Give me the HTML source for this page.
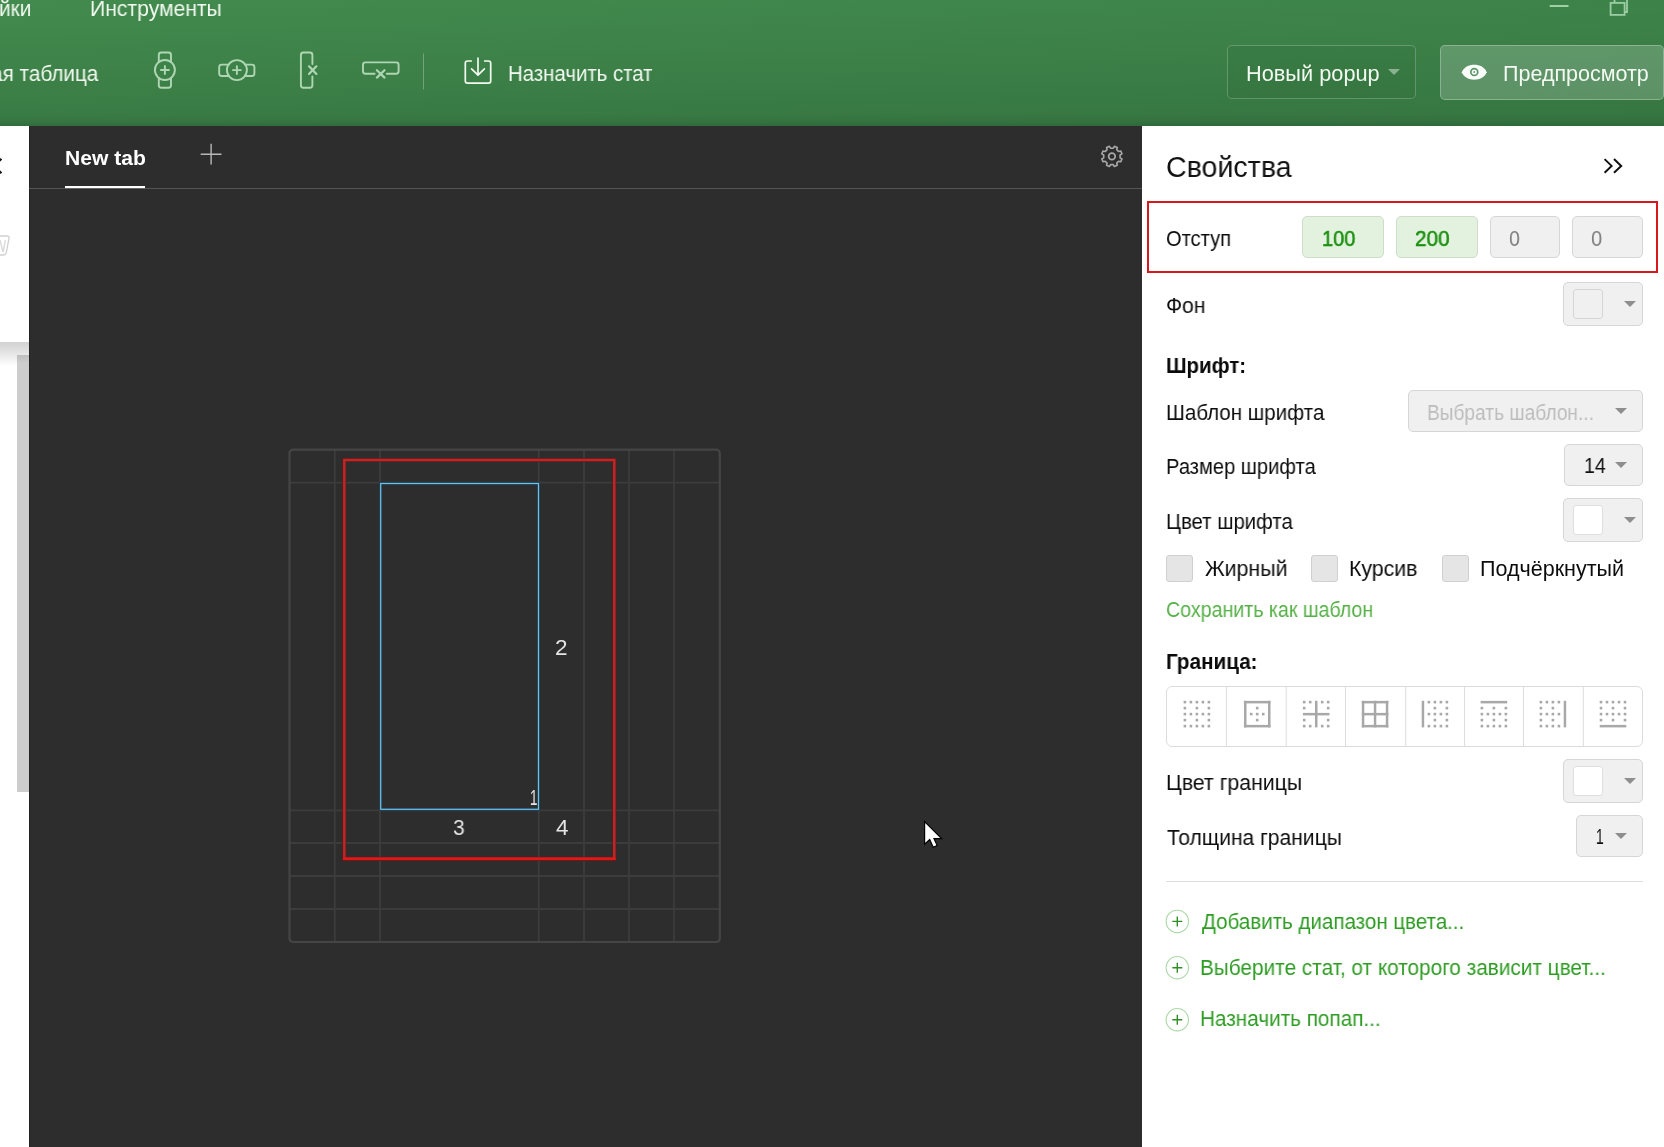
<!DOCTYPE html>
<html lang="ru"><head><meta charset="utf-8"><title>Свойства</title>
<style>
*{box-sizing:border-box;margin:0;padding:0}
html,body{width:1664px;height:1147px;overflow:hidden;background:#fff;font-family:"Liberation Sans","DejaVu Sans",sans-serif}
#hdr{position:absolute;left:0;top:0;width:1664px;height:126px;background:linear-gradient(95deg,#428a4d 0%,#40874c 40%,#3d8349 100%);overflow:hidden}
#hdr .shade{position:absolute;left:0;top:0;width:1664px;height:126px;background:linear-gradient(180deg,rgba(10,40,20,0) 0%,rgba(10,40,20,.02) 20%,rgba(10,40,20,.08) 55%,rgba(10,40,20,.14) 90%,rgba(10,40,20,.20) 96%,rgba(10,40,20,.30) 100%)}
.t{position:absolute;white-space:nowrap;line-height:1;transform-origin:0 0;display:block;will-change:transform}
#canvas{position:absolute;left:29px;top:126px;width:1113px;height:1021px;background:#2d2d2d}
#left{position:absolute;left:0;top:126px;width:29px;height:1021px;background:#fff;overflow:hidden}
#right{position:absolute;left:1142px;top:126px;width:522px;height:1021px;background:#fff}
.box{position:absolute;background:#f0f0f0;border:1px solid #d6d6d6;border-radius:5px}
.gbox{position:absolute;background:#e3f2df;border:1px solid #cddccb;border-radius:5px}
.sw{position:absolute;border:1px solid #dedede;border-radius:3px;background:#fff}
.cb{position:absolute;width:27px;height:27px;background:#e5e5e5;border:1px solid #d0d0d0;border-radius:3px;top:555px}
.arr{position:absolute;width:0;height:0;border-left:6px solid transparent;border-right:6px solid transparent;border-top:6px solid #8e8e8e}
svg{position:absolute;left:0;top:0;overflow:visible}
</style></head><body>
<div id="hdr"><div class="shade"></div>
<div style="position:absolute;left:1227px;top:45px;width:189px;height:54px;border:1px solid rgba(255,255,255,.22);border-radius:5px;background:rgba(0,0,0,.03)"></div>
<div style="position:absolute;left:1440px;top:45px;width:224px;height:55px;border:1px solid rgba(255,255,255,.28);border-radius:5px;background:rgba(255,255,255,.19)"></div>
<div class="arr" style="left:1388px;top:69px;border-top-color:rgba(255,255,255,.42)"></div>
</div>
<div id="left">
<div style="position:absolute;left:0;top:216px;width:29px;height:24px;background:linear-gradient(180deg,#d2d2d2 0%,#e4e4e4 45%,#fff 100%)"></div>
<div style="position:absolute;left:17px;top:229px;width:12px;height:437px;background:#cdcdcd"></div>
<div style="position:absolute;left:17px;top:229px;width:12px;height:8px;background:linear-gradient(180deg,#bdbdbd,#cdcdcd)"></div>
</div>
<div id="canvas"><div style="position:absolute;left:0;top:0;width:1px;height:1021px;background:#232323"></div></div>
<div id="right"></div>

<div class="gbox" style="left:1302px;top:216px;width:82px;height:42px"></div>
<div class="gbox" style="left:1396px;top:216px;width:82px;height:42px"></div>
<div class="box" style="left:1490px;top:216px;width:70px;height:42px"></div>
<div class="box" style="left:1572px;top:216px;width:71px;height:42px"></div>
<div style="position:absolute;left:1147px;top:201px;width:511px;height:71.5px;border:2px solid #d8181c"></div>

<div class="box" style="left:1563px;top:282px;width:80px;height:44px"></div>
<div class="sw" style="left:1573px;top:289px;width:30px;height:30px;background:#f0f0f0;border-color:#d6d6d6"></div>
<div class="arr" style="left:1624px;top:301px"></div>

<div class="box" style="left:1408px;top:390px;width:235px;height:42px"></div>
<div class="arr" style="left:1615px;top:408px"></div>

<div class="box" style="left:1564px;top:444px;width:79px;height:42px"></div>
<div class="arr" style="left:1615px;top:462px"></div>

<div class="box" style="left:1563px;top:498px;width:80px;height:44px"></div>
<div class="sw" style="left:1573px;top:505px;width:30px;height:30px"></div>
<div class="arr" style="left:1624px;top:517px"></div>

<div class="cb" style="left:1166px"></div>
<div class="cb" style="left:1311px"></div>
<div class="cb" style="left:1442px"></div>

<div style="position:absolute;left:1166px;top:686px;width:477px;height:60.5px;border:1px solid #dcdcdc;border-radius:6px;background:#fff"></div>

<div class="box" style="left:1563px;top:759px;width:80px;height:44px"></div>
<div class="sw" style="left:1573px;top:766px;width:30px;height:30px"></div>
<div class="arr" style="left:1624px;top:778px"></div>

<div class="box" style="left:1576px;top:815px;width:67px;height:42px"></div>
<div class="arr" style="left:1615px;top:833px"></div>

<div style="position:absolute;left:1166px;top:881px;width:477px;height:1px;background:#dedede"></div>

<svg width="1664" height="1147" viewBox="0 0 1664 1147" fill="none">
<!-- header icons -->
<g stroke="#afd6b3" stroke-width="1.9" stroke-linecap="round" stroke-linejoin="round">
<path d="M158.8 62 V55 Q158.8 52.5 161.3 52.5 H168.5 Q171 52.5 171 55 V62"/>
<path d="M158.8 78 V85.2 Q158.8 87.7 161.3 87.7 H168.5 Q171 87.7 171 85.2 V78"/>
<circle cx="164.9" cy="70" r="10"/>
<path d="M160.9 70 H168.9 M164.9 66 V74"/>
<path d="M228.5 64.6 H221.7 Q219.2 64.6 219.2 67.1 V73.5 Q219.2 76 221.7 76 H228.5"/>
<path d="M245.3 64.6 H251.9 Q254.4 64.6 254.4 67.1 V73.5 Q254.4 76 251.9 76 H245.3"/>
<circle cx="236.9" cy="70.1" r="10"/>
<path d="M232.9 70.1 H240.9 M236.9 66.1 V74.1"/>
<path d="M312.4 64 V55 Q312.4 52.5 309.9 52.5 H303.4 Q300.9 52.5 300.9 55 V85.2 Q300.9 87.7 303.4 87.7 H309.9 Q312.4 87.7 312.4 85.2 V76.5"/>
<path d="M309 66.3 L316.4 73.9 M316.4 66.3 L309 73.9" stroke-width="2.2"/>
<path d="M374.6 73.8 H365.5 Q363 73.8 363 71.3 V64.9 Q363 62.4 365.5 62.4 H396.1 Q398.6 62.4 398.6 64.9 V71.3 Q398.6 73.8 396.1 73.8 H386.8"/>
<path d="M376.9 70.2 L384.5 77.6 M384.5 70.2 L376.9 77.6" stroke-width="2.2"/>
</g>
<rect x="423" y="53.5" width="1" height="36" fill="rgba(255,255,255,.28)"/>
<!-- assign icon -->
<g stroke="#f3faf1" stroke-width="1.7" stroke-linecap="round" stroke-linejoin="round">
<path d="M471.3 61 H467.5 Q465.3 61 465.3 63.2 V81 Q465.3 83.2 467.5 83.2 H488.5 Q490.7 83.2 490.7 81 V63.2 Q490.7 61 488.5 61 H484.7"/>
<path d="M478 58.2 V75 M471.6 68.8 L478 75.2 L484.4 68.8"/>
</g>
<!-- window buttons -->
<rect x="1549.7" y="5" width="18.8" height="2" fill="#9dd3a4"/>
<g stroke="#9ccca4" stroke-width="1.8"><rect x="1610.6" y="2.9" width="14" height="12"/><path d="M1614.5 2 V-2 H1627 V12 H1625"/></g>
<!-- eye -->
<path d="M1461.8 72.2 C1465.4 62.3 1483.1 62.3 1486.7 72.2 C1483.1 82.1 1465.4 82.1 1461.8 72.2Z" fill="#fbfdfa"/>
<circle cx="1474.3" cy="72" r="4.3" fill="#5a9767"/>
<circle cx="1474.3" cy="72" r="2.6" fill="#fbfdfa"/>
<circle cx="1474.3" cy="72" r="0.9" fill="#5a9767"/>

<!-- tab bar -->
<rect x="29" y="188" width="1113" height="1" fill="#555"/>
<rect x="65" y="186" width="80" height="2.1" fill="#fff"/>
<path d="M200.7 154.2 H221.5 M211.1 143.8 V164.6" stroke="#b8b8b8" stroke-width="1.4"/>
<path d="M1120.09 157.76 L1121.99 158.91 L1120.81 161.76 L1118.65 161.23 L1116.73 163.15 L1117.26 165.31 L1114.41 166.49 L1113.26 164.59 L1110.54 164.59 L1109.39 166.49 L1106.54 165.31 L1107.07 163.15 L1105.15 161.23 L1102.99 161.76 L1101.81 158.91 L1103.71 157.76 L1103.71 155.04 L1101.81 153.89 L1102.99 151.04 L1105.15 151.57 L1107.07 149.65 L1106.54 147.49 L1109.39 146.31 L1110.54 148.21 L1113.26 148.21 L1114.41 146.31 L1117.26 147.49 L1116.73 149.65 L1118.65 151.57 L1120.81 151.04 L1121.99 153.89 L1120.09 155.04Z" stroke="#a8a8a8" stroke-width="1.6" stroke-linejoin="round"/>
<circle cx="1111.9" cy="156.4" r="3.3" stroke="#a8a8a8" stroke-width="1.7"/>

<!-- left panel bits -->
<path d="M1.4 158.8 L-5.8 166 L1.4 173.2" stroke="#111" stroke-width="2.2"/>
<path d="M-6 236 H7 Q9.5 236 9 238.5 L6.3 252.5 Q5.8 255 3.3 255 H-6" stroke="#cfcfcf" stroke-width="1.3"/>
<path d="M0 240 L3 252 L5.5 240" stroke="#d8d8d8" stroke-width="1.3"/>

<!-- grid -->
<g stroke="#3c3c3c" stroke-width="1.8">
<path d="M334.8 450 V942 M379.9 450 V942 M538.7 450 V942 M584 450 V942 M629 450 V942 M674 450 V942"/>
<path d="M289.5 482.6 H720 M289.5 810.3 H720 M289.5 843 H720 M289.5 876 H720 M289.5 909 H720"/>
</g>
<rect x="289.5" y="449.7" width="430.3" height="492.3" rx="3.5" stroke="#454545" stroke-width="2.2"/>
<rect x="344.3" y="460" width="270" height="398.8" stroke="#6a1515" stroke-width="4"/><rect x="344.3" y="460" width="270" height="398.8" stroke="#b52a2a" stroke-width="2.5"/><rect x="342.9" y="857.5" width="272.8" height="2.6" fill="#e21717"/>
<rect x="380.7" y="483.5" width="157.8" height="325.8" stroke="#15425a" stroke-width="2.6"/><rect x="380.7" y="483.5" width="157.8" height="325.8" stroke="#76bee4" stroke-width="1.2"/>
<!-- cursor -->
<path d="M924.6 821.6 V844.2 L929.7 839.6 L933.2 847.3 L937.2 845.6 L934 838.7 H941.6 Z" fill="#fff" stroke="#000" stroke-width="1.2" stroke-linejoin="miter"/>

<!-- chevrons -->
<path d="M1604.6 159.1 L1611.6 165.9 L1604.6 172.7 M1614 159.1 L1621.2 165.9 L1614 172.7" stroke="#111" stroke-width="2"/>
<!-- border icons -->
<rect x="1225.9" y="686.5" width="1" height="59.5" fill="#dcdcdc"/><rect x="1285.7" y="686.5" width="1" height="59.5" fill="#dcdcdc"/><rect x="1345.0" y="686.5" width="1" height="59.5" fill="#dcdcdc"/><rect x="1405.2" y="686.5" width="1" height="59.5" fill="#dcdcdc"/><rect x="1464.1" y="686.5" width="1" height="59.5" fill="#dcdcdc"/><rect x="1523.0" y="686.5" width="1" height="59.5" fill="#dcdcdc"/><rect x="1582.8" y="686.5" width="1" height="59.5" fill="#dcdcdc"/>
<g fill="#a8a8a8"><rect x="1183.6" y="700.8" width="2.6" height="2.6"/><rect x="1189.6" y="700.8" width="2.6" height="2.6"/><rect x="1195.6" y="700.8" width="2.6" height="2.6"/><rect x="1201.6" y="700.8" width="2.6" height="2.6"/><rect x="1207.6" y="700.8" width="2.6" height="2.6"/><rect x="1183.6" y="706.8" width="2.6" height="2.6"/><rect x="1195.6" y="706.8" width="2.6" height="2.6"/><rect x="1207.6" y="706.8" width="2.6" height="2.6"/><rect x="1183.6" y="712.8" width="2.6" height="2.6"/><rect x="1189.6" y="712.8" width="2.6" height="2.6"/><rect x="1195.6" y="712.8" width="2.6" height="2.6"/><rect x="1201.6" y="712.8" width="2.6" height="2.6"/><rect x="1207.6" y="712.8" width="2.6" height="2.6"/><rect x="1183.6" y="718.8" width="2.6" height="2.6"/><rect x="1195.6" y="718.8" width="2.6" height="2.6"/><rect x="1207.6" y="718.8" width="2.6" height="2.6"/><rect x="1183.6" y="724.8" width="2.6" height="2.6"/><rect x="1189.6" y="724.8" width="2.6" height="2.6"/><rect x="1195.6" y="724.8" width="2.6" height="2.6"/><rect x="1201.6" y="724.8" width="2.6" height="2.6"/><rect x="1207.6" y="724.8" width="2.6" height="2.6"/></g><g fill="#a8a8a8"><rect x="1255.9" y="706.8" width="2.6" height="2.6"/><rect x="1249.9" y="712.8" width="2.6" height="2.6"/><rect x="1255.9" y="712.8" width="2.6" height="2.6"/><rect x="1261.9" y="712.8" width="2.6" height="2.6"/><rect x="1255.9" y="718.8" width="2.6" height="2.6"/><rect x="1243.9" y="700.9" width="26.6" height="2.5"/><rect x="1243.9" y="724.9" width="26.6" height="2.5"/><rect x="1244.0" y="700.8" width="2.5" height="26.6"/><rect x="1268.0" y="700.8" width="2.5" height="26.6"/></g><g fill="#a8a8a8"><rect x="1302.9" y="700.8" width="2.6" height="2.6"/><rect x="1308.9" y="700.8" width="2.6" height="2.6"/><rect x="1320.9" y="700.8" width="2.6" height="2.6"/><rect x="1326.9" y="700.8" width="2.6" height="2.6"/><rect x="1302.9" y="706.8" width="2.6" height="2.6"/><rect x="1326.9" y="706.8" width="2.6" height="2.6"/><rect x="1302.9" y="718.8" width="2.6" height="2.6"/><rect x="1326.9" y="718.8" width="2.6" height="2.6"/><rect x="1302.9" y="724.8" width="2.6" height="2.6"/><rect x="1308.9" y="724.8" width="2.6" height="2.6"/><rect x="1320.9" y="724.8" width="2.6" height="2.6"/><rect x="1326.9" y="724.8" width="2.6" height="2.6"/><rect x="1302.9" y="712.9" width="26.6" height="2.5"/><rect x="1315.0" y="700.8" width="2.5" height="26.6"/></g><g fill="#a8a8a8"><rect x="1361.8" y="700.9" width="26.6" height="2.5"/><rect x="1361.8" y="724.9" width="26.6" height="2.5"/><rect x="1361.8" y="700.8" width="2.5" height="26.6"/><rect x="1385.8" y="700.8" width="2.5" height="26.6"/><rect x="1361.8" y="712.9" width="26.6" height="2.5"/><rect x="1373.8" y="700.8" width="2.5" height="26.6"/></g><g fill="#a8a8a8"><rect x="1427.6" y="700.8" width="2.6" height="2.6"/><rect x="1433.6" y="700.8" width="2.6" height="2.6"/><rect x="1439.6" y="700.8" width="2.6" height="2.6"/><rect x="1445.6" y="700.8" width="2.6" height="2.6"/><rect x="1433.6" y="706.8" width="2.6" height="2.6"/><rect x="1445.6" y="706.8" width="2.6" height="2.6"/><rect x="1427.6" y="712.8" width="2.6" height="2.6"/><rect x="1433.6" y="712.8" width="2.6" height="2.6"/><rect x="1439.6" y="712.8" width="2.6" height="2.6"/><rect x="1445.6" y="712.8" width="2.6" height="2.6"/><rect x="1433.6" y="718.8" width="2.6" height="2.6"/><rect x="1445.6" y="718.8" width="2.6" height="2.6"/><rect x="1427.6" y="724.8" width="2.6" height="2.6"/><rect x="1433.6" y="724.8" width="2.6" height="2.6"/><rect x="1439.6" y="724.8" width="2.6" height="2.6"/><rect x="1445.6" y="724.8" width="2.6" height="2.6"/><rect x="1421.7" y="700.8" width="2.5" height="26.6"/></g><g fill="#a8a8a8"><rect x="1480.6" y="706.8" width="2.6" height="2.6"/><rect x="1492.6" y="706.8" width="2.6" height="2.6"/><rect x="1504.6" y="706.8" width="2.6" height="2.6"/><rect x="1480.6" y="712.8" width="2.6" height="2.6"/><rect x="1486.6" y="712.8" width="2.6" height="2.6"/><rect x="1492.6" y="712.8" width="2.6" height="2.6"/><rect x="1498.6" y="712.8" width="2.6" height="2.6"/><rect x="1504.6" y="712.8" width="2.6" height="2.6"/><rect x="1480.6" y="718.8" width="2.6" height="2.6"/><rect x="1492.6" y="718.8" width="2.6" height="2.6"/><rect x="1504.6" y="718.8" width="2.6" height="2.6"/><rect x="1480.6" y="724.8" width="2.6" height="2.6"/><rect x="1486.6" y="724.8" width="2.6" height="2.6"/><rect x="1492.6" y="724.8" width="2.6" height="2.6"/><rect x="1498.6" y="724.8" width="2.6" height="2.6"/><rect x="1504.6" y="724.8" width="2.6" height="2.6"/><rect x="1480.6" y="700.9" width="26.6" height="2.5"/></g><g fill="#a8a8a8"><rect x="1539.6" y="700.8" width="2.6" height="2.6"/><rect x="1545.6" y="700.8" width="2.6" height="2.6"/><rect x="1551.6" y="700.8" width="2.6" height="2.6"/><rect x="1557.6" y="700.8" width="2.6" height="2.6"/><rect x="1539.6" y="706.8" width="2.6" height="2.6"/><rect x="1551.6" y="706.8" width="2.6" height="2.6"/><rect x="1539.6" y="712.8" width="2.6" height="2.6"/><rect x="1545.6" y="712.8" width="2.6" height="2.6"/><rect x="1551.6" y="712.8" width="2.6" height="2.6"/><rect x="1557.6" y="712.8" width="2.6" height="2.6"/><rect x="1539.6" y="718.8" width="2.6" height="2.6"/><rect x="1551.6" y="718.8" width="2.6" height="2.6"/><rect x="1539.6" y="724.8" width="2.6" height="2.6"/><rect x="1545.6" y="724.8" width="2.6" height="2.6"/><rect x="1551.6" y="724.8" width="2.6" height="2.6"/><rect x="1557.6" y="724.8" width="2.6" height="2.6"/><rect x="1563.7" y="700.8" width="2.5" height="26.6"/></g><g fill="#a8a8a8"><rect x="1599.7" y="700.8" width="2.6" height="2.6"/><rect x="1605.7" y="700.8" width="2.6" height="2.6"/><rect x="1611.7" y="700.8" width="2.6" height="2.6"/><rect x="1617.7" y="700.8" width="2.6" height="2.6"/><rect x="1623.7" y="700.8" width="2.6" height="2.6"/><rect x="1599.7" y="706.8" width="2.6" height="2.6"/><rect x="1611.7" y="706.8" width="2.6" height="2.6"/><rect x="1623.7" y="706.8" width="2.6" height="2.6"/><rect x="1599.7" y="712.8" width="2.6" height="2.6"/><rect x="1605.7" y="712.8" width="2.6" height="2.6"/><rect x="1611.7" y="712.8" width="2.6" height="2.6"/><rect x="1617.7" y="712.8" width="2.6" height="2.6"/><rect x="1623.7" y="712.8" width="2.6" height="2.6"/><rect x="1599.7" y="718.8" width="2.6" height="2.6"/><rect x="1611.7" y="718.8" width="2.6" height="2.6"/><rect x="1623.7" y="718.8" width="2.6" height="2.6"/><rect x="1599.7" y="724.9" width="26.6" height="2.5"/></g>
<!-- plus circles -->
<g stroke="#a9d9a4" stroke-width="1.1"><circle cx="1177.3" cy="921.4" r="11.2"/><circle cx="1177.3" cy="967.7" r="11.2"/><circle cx="1177.3" cy="1019.7" r="11.2"/></g>
<g stroke="#2f8f24" stroke-width="1.4"><path d="M1172.3 921.4 H1182.3 M1177.3 916.4 V926.4 M1172.3 967.7 H1182.3 M1177.3 962.7 V972.7 M1172.3 1019.7 H1182.3 M1177.3 1014.7 V1024.7"/></g>
</svg>
<span class="t" style="left:89.55px;top:-1px;font-size:21.5px;color:#f3faf1;transform:scaleX(0.9829)">Инструменты</span>
<span class="t" style="left:507.61px;top:64px;font-size:21.5px;color:#f3faf1;transform:scaleX(0.9482)">Назначить стат</span>
<span class="t" style="left:1245.70px;top:64px;font-size:21.5px;color:#f3faf1;transform:scaleX(1.0118)">Новый popup</span>
<span class="t" style="left:1503.12px;top:64px;font-size:21.5px;color:#f3faf1;transform:scaleX(0.9995)">Предпросмотр</span>
<span class="t" style="left:64.58px;top:147px;font-size:21px;color:#ffffff;transform:scaleX(1.0049);font-weight:700">New tab</span>
<span class="t" style="left:1165.56px;top:153px;font-size:29px;color:#111;transform:scaleX(0.9860)">Свойства</span>
<span class="t" style="left:1166.46px;top:229px;font-size:21.5px;color:#0c0c0c;transform:scaleX(0.9343)">Отступ</span>
<span class="t" style="left:1166.41px;top:296px;font-size:21.5px;color:#0c0c0c;transform:scaleX(0.9839)">Фон</span>
<span class="t" style="left:1166.12px;top:356px;font-size:21.5px;color:#0a0a0a;transform:scaleX(0.9513);font-weight:700">Шрифт:</span>
<span class="t" style="left:1165.79px;top:403px;font-size:21.5px;color:#0c0c0c;transform:scaleX(0.9558)">Шаблон шрифта</span>
<span class="t" style="left:1165.83px;top:457px;font-size:21.5px;color:#0c0c0c;transform:scaleX(0.9367)">Размер шрифта</span>
<span class="t" style="left:1165.81px;top:512px;font-size:21.5px;color:#0c0c0c;transform:scaleX(0.9449)">Цвет шрифта</span>
<span class="t" style="left:1205.20px;top:559px;font-size:21.5px;color:#0c0c0c;transform:scaleX(0.9915)">Жирный</span>
<span class="t" style="left:1349.34px;top:559px;font-size:21.5px;color:#0c0c0c;transform:scaleX(0.9892)">Курсив</span>
<span class="t" style="left:1479.92px;top:559px;font-size:21.5px;color:#0c0c0c;transform:scaleX(1.0007)">Подчёркнутый</span>
<span class="t" style="left:1166.48px;top:600px;font-size:21.5px;color:#55b046;transform:scaleX(0.9122)">Сохранить как шаблон</span>
<span class="t" style="left:1166.11px;top:652px;font-size:21.5px;color:#0a0a0a;transform:scaleX(0.9606);font-weight:700">Граница:</span>
<span class="t" style="left:1165.74px;top:773px;font-size:21.5px;color:#0c0c0c;transform:scaleX(0.9901)">Цвет границы</span>
<span class="t" style="left:1167.07px;top:828px;font-size:21.5px;color:#0c0c0c;transform:scaleX(0.9801)">Толщина границы</span>
<span class="t" style="left:1201.60px;top:912px;font-size:21.5px;color:#2d9c22;transform:scaleX(0.9554)">Добавить диапазон цвета...</span>
<span class="t" style="left:1200.38px;top:958px;font-size:21.5px;color:#2d9c22;transform:scaleX(0.9670)">Выберите стат, от которого зависит цвет...</span>
<span class="t" style="left:1200.38px;top:1009px;font-size:21.5px;color:#2d9c22;transform:scaleX(0.9639)">Назначить попап...</span>
<span class="t" style="left:1321.55px;top:228px;font-size:22px;color:#1b9010;transform:scaleX(0.9085);-webkit-text-stroke:0.55px #1b9010">100</span>
<span class="t" style="left:1414.53px;top:228px;font-size:22px;color:#1b9010;transform:scaleX(0.9423);-webkit-text-stroke:0.55px #1b9010">200</span>
<span class="t" style="left:1508.69px;top:228px;font-size:22px;color:#7c7c7c;transform:scaleX(0.8909)">0</span>
<span class="t" style="left:1591.17px;top:228px;font-size:22px;color:#7c7c7c;transform:scaleX(0.9182)">0</span>
<span class="t" style="left:1426.81px;top:403px;font-size:21.5px;color:#bcbcbc;transform:scaleX(0.8895)">Выбрать шаблон...</span>
<span class="t" style="left:1583.78px;top:455px;font-size:22px;color:#111;transform:scaleX(0.8870)">14</span>
<span class="t" style="left:1596.14px;top:826px;font-size:22px;color:#111;transform:scaleX(0.6219)">1</span>
<span class="t" style="left:555.36px;top:637px;font-size:22.5px;color:#e4e4e4;transform:scaleX(0.9861)">2</span>
<span class="t" style="left:529.86px;top:787px;font-size:22.5px;color:#e4e4e4;transform:scaleX(0.5983)">1</span>
<span class="t" style="left:453.34px;top:817px;font-size:22.5px;color:#e4e4e4;transform:scaleX(0.9359)">3</span>
<span class="t" style="left:555.55px;top:817px;font-size:22.5px;color:#e4e4e4;transform:scaleX(0.9826)">4</span>
<span class="t" style="left:-1.14px;top:-1px;font-size:21.5px;color:#f3faf1;transform:scaleX(0.965)">йки</span>
<span class="t" style="left:-9.05px;top:64px;font-size:21.5px;color:#f3faf1;transform:scaleX(0.965)">ая таблица</span>
</body></html>
